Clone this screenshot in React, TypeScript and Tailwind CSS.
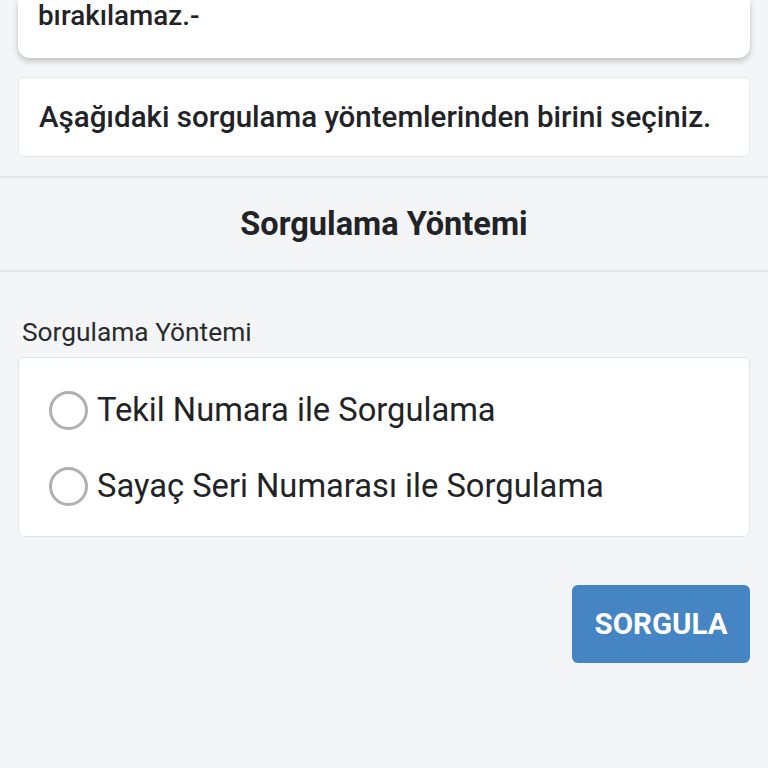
export default function App() {
  const options = ["Tekil Numara ile Sorgulama", "Sayaç Seri Numarası ile Sorgulama"];

  return (
    <div
      className="min-h-screen bg-[#f4f5f7] text-[#222326] overflow-hidden"
      style={{ fontFamily: "Roboto, 'Noto Sans', sans-serif" }}
    >
      {/* Warning card (scrolled, only last line visible) */}
      <div className="px-[18px]">
        <div className="rounded-b-xl bg-white px-5 pt-[1px] pb-[27px] shadow-[0_3px_6px_rgba(0,0,0,0.22)]">
          <p className="text-[27.8px] font-medium leading-[30px]">bırakılamaz.-</p>
        </div>

        <div className="mt-[19px] rounded-md border border-[#e4e6e9] bg-white px-5 py-[21px]">
          <p className="whitespace-nowrap text-[29.5px] font-medium leading-[36px]">
            Aşağıdaki sorgulama yöntemlerinden birini seçiniz.
          </p>
        </div>
      </div>

      {/* Section header */}
      <div className="mt-[19px] border-y-2 border-[#e3e5e8] py-[28px] text-center">
        <h2 className="text-[32.5px] font-bold leading-[36px]">Sorgulama Yöntemi</h2>
      </div>

      {/* Form */}
      <div className="px-[18px] pt-[45px]">
        <label className="block pl-1 text-[26.3px] leading-[30px] text-[#2a2b2e]">Sorgulama Yöntemi</label>
        <div className="mt-[10px] flex flex-col gap-[36px] rounded-md border border-[#e2e4e7] bg-white pl-[30px] pt-[32px] pb-[30px]">
          {options.map((o) => (
            <div key={o} className="flex h-[40px] items-center gap-[9px]">
              <span className="h-[39px] w-[39px] shrink-0 rounded-full border-[3px] border-[#b0b0b0] bg-white" />
              <span className="text-[32.7px] leading-[40px] text-[#222326]">{o}</span>
            </div>
          ))}
        </div>

        <div className="mt-[48px] flex justify-end">
          <button className="h-[78px] w-[178px] rounded-md bg-[#4585c4] text-[29.5px] font-bold text-white">
            SORGULA
          </button>
        </div>
      </div>
    </div>
  );
}
